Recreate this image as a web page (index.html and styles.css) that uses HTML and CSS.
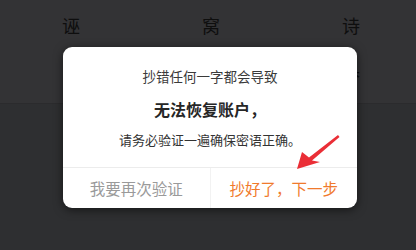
FILE: index.html
```html
<!DOCTYPE html>
<html lang="zh-CN">
<head>
  <meta charset="UTF-8">
  <meta name="viewport" content="width=device-width, initial-scale=1.0">
  <title>备份助记词</title>
  <link rel="stylesheet" href="styles.css">
</head>
<body>
  <div class="page">
    <div class="words">
      <span>诬</span><span>窝</span><span>诗</span>
      <span></span><span></span><span>具</span>
    </div>
  </div>

  <div class="dialog">
    <div class="dialog-body">
      <p class="line">抄错任何一字都会导致</p>
      <p class="line strong">无法恢复账户，</p>
      <p class="line small">请务必验证一遍确保密语正确。</p>
    </div>
    <div class="dialog-actions">
      <button class="btn btn-cancel">我要再次验证</button>
      <button class="btn btn-ok">抄好了，下一步</button>
    </div>
    <!-- 提示箭头 -->
    <svg class="arrow" width="52" height="44" viewBox="0 0 52 44">
      <path d="M47 5 L48.5 7 L21 30.5 L29 32 L6 39 L11 22 L18 27.5 Z" fill="#ea2e36"/>
    </svg>
  </div>
</body>
</html>
```

FILE: styles.css
```css
body {
  margin: 0;
  padding: 0;
  background: #2e2f31;
  font-family: "Noto Sans CJK SC", "Noto Sans", sans-serif;
  overflow: hidden;
}

.page {
  width: 416px;
  height: 250px;
}

.words {
  display: grid;
  grid-template-columns: repeat(3, 140px);
  grid-auto-rows: 43px;
  padding: 4px 0 0 1px;
  background: #333335;
  border-bottom: 1px solid #2b2b2d;
  box-sizing: border-box;
  height: 104px;
}

.words span {
  text-align: center;
  font-size: 18px;
  line-height: 43px;
  color: #0e0e0e;
}

.dialog {
  position: absolute;
  left: 63px;
  top: 47px;
  width: 294px;
  height: 161px;
  background: #fff;
  border-radius: 9px;
  box-shadow: 0 2px 10px rgba(0, 0, 0, 0.55);
}

.dialog-body {
  padding: 19px 0 17px;
  text-align: center;
  height: 120px;
  box-sizing: border-box;
}

.line {
  margin: 0;
  font-size: 13.5px;
  line-height: 20px;
  color: #3a3a3a;
}

.line.strong {
  margin-top: 12px;
  font-size: 16px;
  line-height: 22px;
  font-weight: bold;
  color: #262626;
}

.line.small {
  margin-top: 10px;
  font-size: 13px;
  color: #333;
}

.dialog-actions {
  display: flex;
  border-top: 1px solid #ececec;
  height: 40px;
}

.btn {
  flex: 1;
  border: none;
  background: none;
  font-family: inherit;
  font-size: 15.5px;
  padding: 0;
  cursor: pointer;
}

.btn-cancel {
  color: #9a9a9a;
  border-right: 1px solid #f2f2f2;
}

.btn-ok {
  color: #f07a2c;
}

.arrow {
  position: absolute;
  left: 228px;
  top: 83px;
}
```
